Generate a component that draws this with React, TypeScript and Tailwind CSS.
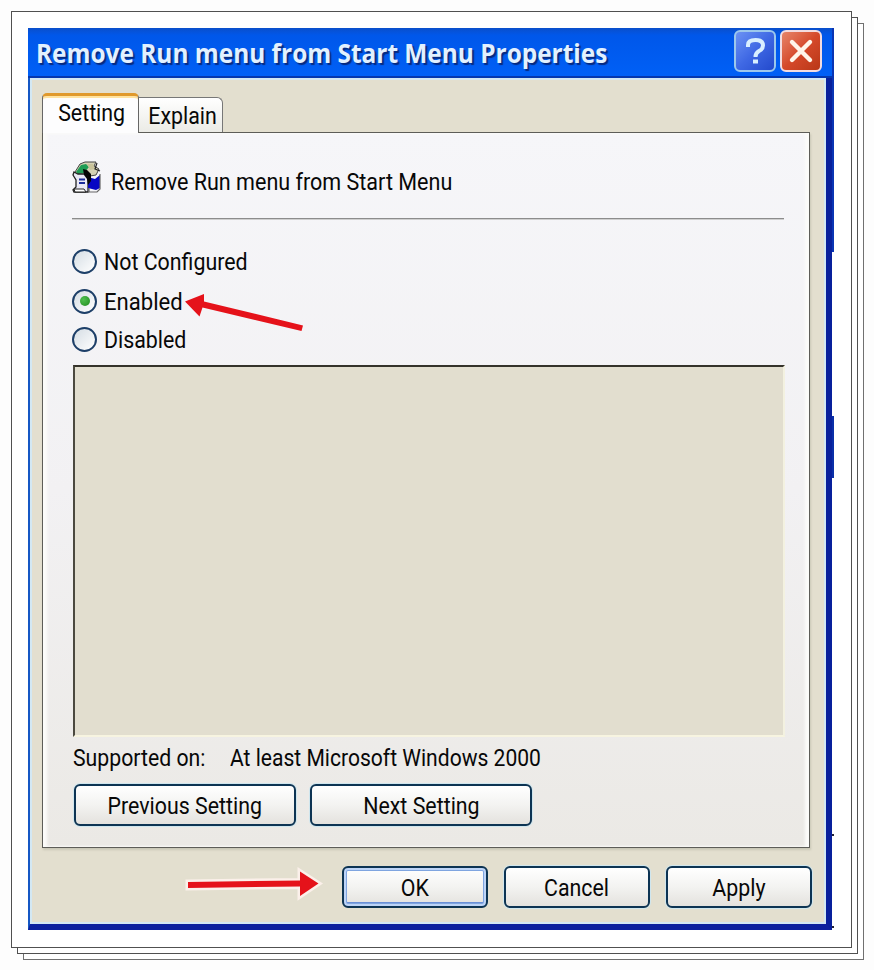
import clsx from "clsx";

function RunIcon() {
  return (
    <svg className="shrink-0" width="30" height="34" viewBox="0 0 30 34" fill="none">
      <path d="M3 11 L8 3 L13 1 L24 1 L22 5 L27 8 L24 14 L6 17Z" fill="#d5d2b4" stroke="#444" strokeWidth="1" />
      <path d="M4 11 L9 4 L14 3 L17 6 L12 12 L6 13Z" fill="#1f9d55" />
      <path d="M15 3 L21 3 L23 8 L18 9Z" fill="#c9c39a" />
      <path d="M2 11 L6 13 H16 V31 H2 L1 29 L4 26 V19 L1 14Z" fill="#e9e9f6" stroke="#222" strokeWidth="1.3" />
      <path d="M7 18.5 H13 M7 22 H13" stroke="#1b2c9a" strokeWidth="2" />
      <path d="M2 28 H12 L14 31 H3Z" fill="#fff" stroke="#222" strokeWidth="1" />
      <path d="M16 16 L23 18 L28 14 V27 L24 29 L16 27Z" fill="#0707c4" />
      <path d="M28 13 V28 L25 31 H17 V27" stroke="#666" strokeWidth="1.2" />
      <path d="M11 8 L15 9 L19 13 L19 20 L16 24 L15 18 L12 14Z" fill="#050505" />
      <path d="M25 2 L23 8 L28 10" stroke="#222" strokeWidth="1.2" />
    </svg>
  );
}

function Radio({ label, checked, className }: { label: string; checked?: boolean; className?: string }) {
  return (
    <label className={clsx("flex h-[26px] items-center gap-[7px]", className)}>
      <span className="flex size-[25px] shrink-0 items-center justify-center rounded-full border-2 border-[#1d3f68] bg-linear-to-br from-[#d5dde4] to-white">
        {checked && <span className="size-[10px] rounded-full bg-radial-[at_35%_35%] from-[#4fc04f] to-[#1f8a1f]" />}
      </span>
      <span className={clsx("relative top-px origin-left whitespace-nowrap", checked ? "scale-x-[0.92]" : "scale-x-[0.89]")}>
        {label}
      </span>
    </label>
  );
}

function Button({ label, primary, className }: { label: string; primary?: boolean; className?: string }) {
  return (
    <button
      className={clsx(
        "h-[42px] shrink-0 rounded-[6px] border-2 border-[#0d3453] bg-linear-to-b from-white via-[#f3f3f1] to-[#e4e2de] pt-[2px]",
        primary
          ? "shadow-[inset_0_0_0_2px_#bdd4f7,inset_0_0_0_3px_#7fa5e0,inset_0_-4px_0_#6b8fd6]"
          : "shadow-[0_0_0_1px_#cfe6ee]",
        className,
      )}
    >
      <span className="inline-block scale-x-[0.89] whitespace-nowrap">{label}</span>
    </button>
  );
}

export default function App() {
  return (
    <div className="relative h-[970px] w-[874px] overflow-hidden bg-[#fdfdfd] font-[Roboto,'Liberation_Sans',sans-serif] text-[24px] leading-[28px] text-[#080808]">
      {/* stacked paper sheets */}
      <div className="mt-[11px] ml-[11px] h-[937px] w-[841px] border border-[#505050] bg-white p-4 shadow-[6px_6px_0_-1px_#fff,6px_6px_0_0_#505050,12px_12px_0_-1px_#fff,12px_12px_0_0_#707070]">
        <div className="relative flex h-[902px] w-[804px] flex-col border-r-[6px] border-b-[6px] border-l-2 border-r-[#08209c] border-b-[#0c219e] border-l-[#1557c4]">
          {/* title bar */}
          <div className="-mr-[6px] -ml-[2px] flex h-[50px] shrink-0 items-center border-b-2 border-[#0437ae] bg-linear-to-b from-[#0a4fcb] via-[#0057ea] via-15% to-[#0060f6] pr-[10px] pl-[8px]">
            <h1 className="relative top-px origin-left scale-x-[0.904] font-['Open_Sans',sans-serif] text-[27px] leading-[36px] font-bold whitespace-nowrap text-[#e2f1ff] [text-shadow:2px_2px_1px_#062a80]">
              Remove Run menu from Start Menu Properties
            </h1>
            <div className="relative -top-px ml-auto flex shrink-0 gap-[4px]">
              <button className="flex size-[42px] items-center justify-center rounded-[6px] border-2 border-[#9cc8ec] bg-linear-to-br from-[#6c92f4] via-[#3f68e4] to-[#2349cc]">
                <svg width="26" height="32" viewBox="0 0 26 32" fill="none" stroke="#d9efff" strokeWidth="4">
                  <path d="M6 12 V10 Q6 5 13.500 5 Q21 5 21 10.500 Q21 14 17 16 Q13.500 18 13.500 22" />
                  <path d="M13.500 24.500 V28.500" strokeWidth="5" />
                </svg>
              </button>
              <button className="flex size-[42px] items-center justify-center rounded-[6px] border-2 border-[#f3dcdf] bg-linear-to-br from-[#e68468] via-[#d5492a] to-[#b93717]">
                <svg width="26" height="26" viewBox="0 0 26 26" stroke="#fff6ea" strokeWidth="4.4" strokeLinecap="round">
                  <path d="M4 4 L22 22 M22 4 L4 22" />
                </svg>
              </button>
            </div>
          </div>

          {/* dialog body */}
          <div className="flex grow flex-col border-2 border-[#d3e8f3] bg-[#e3dfcf] pt-[13px] pl-[10px]">
            <div className="flex h-[39px] shrink-0 items-end">
              <div className="relative z-10 -mb-px h-[40px] w-[97px] rounded-t-[5px] border border-t-[3px] border-b-0 border-[#666] border-t-[#e0992c] bg-[#fdfdfe] pt-[3px] text-center shadow-[inset_0_2px_0_#ffe3a0]">
                <span className="relative left-px inline-block scale-x-[0.89]">Setting</span>
              </div>
              <div className="-ml-px h-[35px] w-[85px] rounded-tr-[6px] border border-b-0 border-[#777] bg-linear-to-b from-white to-[#ebebe6] pt-[4px] text-center">
                <span className="relative left-[2px] inline-block scale-x-[0.89]">Explain</span>
              </div>
            </div>

            <div className="flex h-[716px] w-[768px] shrink-0 flex-col border border-[#5d5d58] bg-linear-to-b from-[#f6f6f9] via-[#f2f1f3] to-[#ebe9e5] px-[29px] shadow-[inset_-4px_0_3px_#fcfcfa,inset_4px_0_3px_#fcfcfa,1px_2px_2px_#c9c7b6]">
              <div className="mt-[28px] flex h-[34px] items-center gap-[9px]">
                <RunIcon />
                <span className="relative top-[4px] origin-left scale-x-[0.897] whitespace-nowrap">Remove Run menu from Start Menu</span>
              </div>
              <div className="mt-[23px] h-[2px] w-[712px] border-b border-[#cfcfcf] bg-[#8c8c8c]" />

              <Radio label="Not Configured" className="mt-[28px]" />
              <Radio label="Enabled" checked className="mt-[14px]" />
              <Radio label="Disabled" className="mt-[12px]" />

              <div className="mt-[13px] ml-px h-[372px] w-[712px] border-2 border-t-[#34322a] border-r-[#f3f1e0] border-b-[#f7f4e0] border-l-[#4b493f] bg-[#e2decf]" />

              <div className="mt-[7px] ml-px flex">
                <span className="w-[157px] origin-left scale-x-[0.885] whitespace-nowrap">Supported on:</span>
                <span className="origin-left scale-x-[0.878] whitespace-nowrap">At least Microsoft Windows 2000</span>
              </div>
              <div className="mt-[12px] ml-[2px] flex gap-[14px]">
                <Button label="Previous Setting" className="w-[222px]" />
                <Button label="Next Setting" className="w-[222px]" />
              </div>
            </div>

            <div className="mt-[18px] ml-[300px] flex gap-[16px]">
              <Button label="OK" primary className="w-[146px]" />
              <Button label="Cancel" className="w-[146px]" />
              <Button label="Apply" className="w-[146px]" />
            </div>
          </div>

          {/* uneven right edge of the frame */}
          <div className="absolute top-0 -right-[8px] h-[224px] w-[2px] bg-[#0a35b4]" />
          <div className="absolute top-[388px] -right-[8px] h-[62px] w-[2px] bg-[#0a2fa8]" />
          <div className="absolute top-[806px] -right-[8px] size-[2px] bg-[#223]" />
          <div className="absolute top-[898px] -right-[8px] size-[2px] bg-[#223]" />
        </div>
      </div>

      {/* pointer arrows */}
      <svg className="absolute top-[285px] left-[180px]" width="130" height="50" viewBox="180 285 130 50">
        <path d="M303 325.500 L204 301.500 L204 294 L185 301.500 L199.500 316.500 L202.500 307.500 L301.500 331Z" fill="#e5121a" />
      </svg>
      <svg className="absolute top-[860px] left-[180px]" width="150" height="50" viewBox="180 860 150 50">
        <path
          d="M188 882 L300 880.500 V871.500 L318.500 883.500 L300 896 V886.500 L188 888Z"
          fill="#e5121a"
          stroke="#fbf0ea"
          strokeWidth="5"
          paintOrder="stroke"
        />
      </svg>
    </div>
  );
}
